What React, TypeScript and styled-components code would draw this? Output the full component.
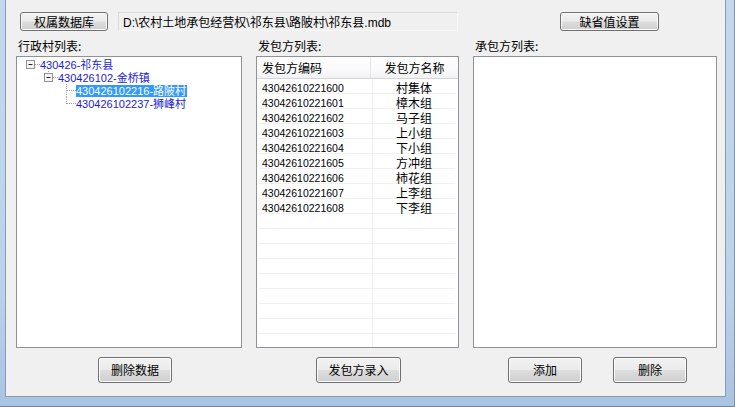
import React from "react";
import styled, { createGlobalStyle } from "styled-components";

const Global = createGlobalStyle`
  html, body { margin: 0; padding: 0; background: #c9dcf0; }
  body { font-family: "Noto Sans CJK SC", "Liberation Sans", sans-serif; font-size: 12px; color: #000; }
`;

const Frame = styled.div`
  width: 735px;
  height: 407px;
  box-sizing: border-box;
  padding: 0 8px 9px 5px;
  background: linear-gradient(180deg, #c3d7ee 0%, #bcd2ec 70%, #a9c3e2 100%);
  border-bottom: 1px solid #6f84a0;
  border-right: 1px solid #7f93ad;
`;

const Client = styled.div`
  height: 100%;
  box-sizing: border-box;
  background: #f0f0f0;
  border: 1px solid #8a9bb0;
  border-top: none;
  display: flex;
  flex-direction: column;
  padding-top: 12px;
`;

const TopBar = styled.div`
  display: flex;
  align-items: center;
  height: 19px;
  padding: 0 66px 0 14px;
`;

const Button = styled.button<{ $w: number; $h?: number }>`
  width: ${(p) => p.$w}px;
  height: ${(p) => p.$h ?? 19}px;
  box-sizing: border-box;
  border: 1px solid #707070;
  border-radius: 3px;
  background: linear-gradient(180deg, #f2f2f2 0%, #ebebeb 48%, #dddddd 52%, #cfcfcf 100%);
  box-shadow: inset 0 0 0 1px #fcfcfc;
  font-family: "Noto Sans CJK SC", sans-serif;
  font-size: 12px;
  color: #000;
  padding: 0;
  line-height: 1;
`;

const PathBox = styled.div`
  margin-left: 10px;
  width: 340px;
  height: 19px;
  box-sizing: border-box;
  border: 1px solid #dadada;
  border-right-color: #f8f8f8;
  border-bottom-color: #f8f8f8;
  background: #f0f0f0;
  display: flex;
  align-items: center;
  padding-left: 4px;
  font-family: "Liberation Sans", "Noto Sans CJK SC", sans-serif;
  font-size: 12px;
  white-space: nowrap;
`;

const Spacer = styled.div`
  flex: 1;
`;

const Panels = styled.div`
  display: grid;
  grid-template-columns: 226px 203px 244px;
  column-gap: 14px;
  padding-left: 10px;
  margin-top: 8px;
`;

const Column = styled.div`
  display: flex;
  flex-direction: column;
`;

const Label = styled.div`
  height: 17px;
  line-height: 14px;
  padding-left: 2px;
  font-size: 12px;
`;

const ListBox = styled.div`
  height: 292px;
  box-sizing: border-box;
  background: #fff;
  border: 1px solid #8f9296;
  overflow: hidden;
`;

const Tree = styled.div`
  padding: 1px 0 0 5px;
  display: flex;
  flex-direction: column;
`;

const TreeRow = styled.div<{ $level: number }>`
  display: flex;
  align-items: center;
  height: 13px;
  padding-left: ${(p) => p.$level * 18}px;
`;

const NodeText = styled.span<{ $selected?: boolean }>`
  font-family: "Liberation Sans", "Noto Sans CJK SC", sans-serif;
  font-size: 11px;
  line-height: 12px;
  padding: 0 1px 0 0;
  white-space: nowrap;
  color: ${(p) => (p.$selected ? "#fff" : "#1a1ad8")};
  background: ${(p) => (p.$selected ? "#3399ff" : "transparent")};
`;

const Table = styled.div`
  display: flex;
  flex-direction: column;
`;

const HeaderRow = styled.div`
  display: grid;
  grid-template-columns: 114px 1fr;
  height: 22px;
  box-sizing: border-box;
  background: linear-gradient(180deg, #ffffff 0%, #fafafa 60%, #f1f2f4 100%);
  border-bottom: 1px solid #d5d5d5;
`;

const HeaderCell = styled.div<{ $center?: boolean }>`
  display: flex;
  align-items: center;
  justify-content: ${(p) => (p.$center ? "center" : "flex-start")};
  padding-left: ${(p) => (p.$center ? 0 : 5)}px;
  border-right: ${(p) => (p.$center ? "none" : "1px solid #e3e5e8")};
  font-size: 12px;
`;

const DataRow = styled.div`
  display: grid;
  grid-template-columns: 114px 1fr;
  height: 15px;
  box-sizing: border-box;
  border-bottom: 1px solid #f0f0f0;
  margin: 0 3px 0 2px;
`;

const CodeCell = styled.div`
  display: flex;
  align-items: center;
  padding-left: 3px;
  border-right: 1px solid #f0f0f0;
  font-family: "Liberation Sans", sans-serif;
  font-size: 10.5px;
`;

const NameCell = styled.div`
  display: flex;
  align-items: center;
  justify-content: center;
  font-family: "Liberation Sans", "Noto Sans CJK SC", sans-serif;
  font-size: 12px;
`;

const ButtonRow = styled.div`
  display: grid;
  grid-template-columns: 226px 203px 244px;
  column-gap: 14px;
  padding-left: 10px;
  margin-top: 9px;
`;

const ButtonSlot = styled.div<{ $offset: number; $gap?: number }>`
  display: flex;
  gap: ${(p) => p.$gap ?? 0}px;
  padding-left: ${(p) => p.$offset}px;
`;

type Conn = "root" | "child" | "mid" | "last";

const Connector = ({ kind }: { kind: Conn }) => {
  const dot = { stroke: "#a0a0a0", strokeWidth: 1, strokeDasharray: "1 1" };
  const box = kind === "root" || kind === "child";
  return (
    <svg width="18" height="13" viewBox="0 0 18 13" style={{ flex: "none" }}>
      {kind === "child" && <line x1="8.5" y1="0" x2="8.5" y2="2" {...dot} />}
      {kind === "mid" && <line x1="8.5" y1="0" x2="8.5" y2="13" {...dot} />}
      {kind === "last" && <line x1="8.5" y1="0" x2="8.5" y2="7" {...dot} />}
      {box ? (
        <>
          <line x1="13" y1="6.5" x2="18" y2="6.5" {...dot} />
          <rect x="4.5" y="2.5" width="8" height="8" fill="#f4f4f4" stroke="#929292" />
          <line x1="6.5" y1="6.5" x2="10.5" y2="6.5" stroke="#222" />
        </>
      ) : (
        <line x1="9" y1="6.5" x2="18" y2="6.5" {...dot} />
      )}
    </svg>
  );
};

const nodes: { level: number; kind: Conn; text: string; selected?: boolean }[] = [
  { level: 0, kind: "root", text: "430426-祁东县" },
  { level: 1, kind: "child", text: "430426102-金桥镇" },
  { level: 2, kind: "mid", text: "430426102216-路陂村", selected: true },
  { level: 2, kind: "last", text: "430426102237-狮峰村" },
];

const rows: [string, string][] = [
  ["43042610221600", "村集体"],
  ["43042610221601", "樟木组"],
  ["43042610221602", "马子组"],
  ["43042610221603", "上小组"],
  ["43042610221604", "下小组"],
  ["43042610221605", "方冲组"],
  ["43042610221606", "柿花组"],
  ["43042610221607", "上李组"],
  ["43042610221608", "下李组"],
];

const empty = Array.from({ length: 9 }, (_, i) => i);

const App = () => {
  return (
    <>
      <Global />
      <Frame>
        <Client>
          <TopBar>
            <Button $w={88}>权属数据库</Button>
            <PathBox>D:\农村土地承包经营权\祁东县\路陂村\祁东县.mdb</PathBox>
            <Spacer />
            <Button $w={99}>缺省值设置</Button>
          </TopBar>
          <Panels>
            <Column>
              <Label>行政村列表:</Label>
              <ListBox>
                <Tree>
                  {nodes.map((n) => (
                    <TreeRow key={n.text} $level={n.level}>
                      <Connector kind={n.kind} />
                      <NodeText $selected={n.selected}>{n.text}</NodeText>
                    </TreeRow>
                  ))}
                </Tree>
              </ListBox>
            </Column>
            <Column>
              <Label>发包方列表:</Label>
              <ListBox>
                <Table>
                  <HeaderRow>
                    <HeaderCell>发包方编码</HeaderCell>
                    <HeaderCell $center>发包方名称</HeaderCell>
                  </HeaderRow>
                  {rows.map(([code, name]) => (
                    <DataRow key={code}>
                      <CodeCell>{code}</CodeCell>
                      <NameCell>{name}</NameCell>
                    </DataRow>
                  ))}
                  {empty.map((i) => (
                    <DataRow key={i}>
                      <CodeCell />
                      <NameCell />
                    </DataRow>
                  ))}
                </Table>
              </ListBox>
            </Column>
            <Column>
              <Label>承包方列表:</Label>
              <ListBox />
            </Column>
          </Panels>
          <ButtonRow>
            <ButtonSlot $offset={82}>
              <Button $w={74} $h={26}>删除数据</Button>
            </ButtonSlot>
            <ButtonSlot $offset={60}>
              <Button $w={85} $h={26}>发包方录入</Button>
            </ButtonSlot>
            <ButtonSlot $offset={35} $gap={31}>
              <Button $w={74} $h={26}>添加</Button>
              <Button $w={74} $h={26}>删除</Button>
            </ButtonSlot>
          </ButtonRow>
        </Client>
      </Frame>
    </>
  );
};

export default App;
